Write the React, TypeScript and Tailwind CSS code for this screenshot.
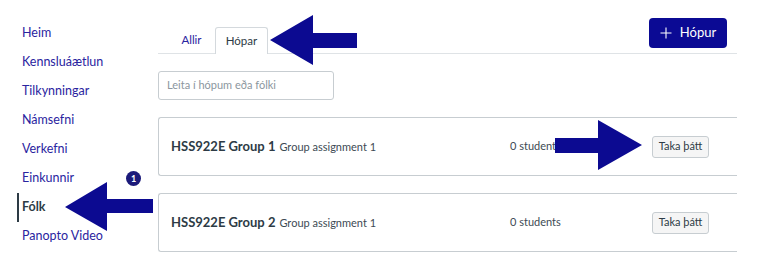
import React from "react";

const navItems = [
  "Heim",
  "Kennsluáætlun",
  "Tilkynningar",
  "Námsefni",
  "Verkefni",
  "Einkunnir",
  "Fólk",
  "Panopto Video",
];

const groups = [
  { name: "HSS922E Group 1", set: "Group assignment 1", count: "0 students" },
  { name: "HSS922E Group 2", set: "Group assignment 1", count: "0 students" },
];

const App: React.FC = () => {
  return (
    <div className="relative w-[768px] h-[271px] bg-white overflow-hidden font-['Lato','Liberation_Sans',sans-serif]">
      <div className="flex">
        {/* Course navigation */}
        <nav className="w-[158px] shrink-0 pl-[17px] pt-[19px]">
          {navItems.map((item) => {
            const active = item === "Fólk";
            return (
              <div
                key={item}
                className={`h-[29px] flex items-center pl-[3px] border-l-2 text-[12.5px] ${
                  active
                    ? "border-[#2d3b45] text-[#2d3b45] font-bold"
                    : "border-transparent text-[#2a24a0]"
                }`}
              >
                {item}
              </div>
            );
          })}
        </nav>

        {/* Main */}
        <main className="w-[579px] pt-[18px]">
          <div className="flex justify-between h-[36px] border-b border-[#dfe3e6]">
            <div className="flex items-end pl-[10px]">
              <div className="w-[47px] h-[27px] flex items-center justify-center text-[11.5px] text-[#2a24a0]">
                Allir
              </div>
              <div className="w-[53px] h-[27px] -mb-px flex items-center justify-center text-[11.5px] text-[#2d3b45] bg-white border border-b-0 border-[#d4d9dd] rounded-t-[3px]">
                Hópar
              </div>
            </div>
            <button className="mr-[10px] w-[78px] h-[30px] rounded-[4px] bg-[#0b0a94] text-white text-[13px] flex items-center justify-center gap-[8px]">
              <svg width="12" height="12" viewBox="0 0 12 12" className="shrink-0">
                <path d="M6 0.5v11M0.5 6h11" stroke="white" strokeWidth="1.1" fill="none" />
              </svg>
              Hópur
            </button>
          </div>

          <div className="mt-[17px] w-[176px] h-[29px] border border-[#c7cdd1] rounded-[3px] flex items-center pl-[8px] text-[11px] text-[#8b969e]">
            Leita í hópum eða fólki
          </div>

          <div className="mt-[17px] flex flex-col gap-[17px]">
            {groups.map((g) => (
              <div
                key={g.name}
                className="h-[59px] border border-r-0 border-[#c7cdd1] rounded-l-[3px] flex items-center pl-[12px]"
              >
                <div className="w-[339px] flex items-baseline gap-[4px] text-[#2d3b45]">
                  <span className="text-[13px] font-bold">{g.name}</span>
                  <span className="text-[11px] text-[#3d4a54]">{g.set}</span>
                </div>
                <span className="text-[11px] text-[#3d4a54]">{g.count}</span>
                <button className="ml-auto mr-[28px] w-[57px] h-[22px] rounded-[3px] border border-[#c7cdd1] bg-[#f5f5f5] text-[11px] text-[#2d3b45] flex items-center justify-center">
                  Taka þátt
                </button>
              </div>
            ))}
          </div>
        </main>
      </div>

      {/* Notification badge */}
      <div className="absolute left-[126px] top-[171px] w-[15px] h-[15px] rounded-full bg-[#1b1a7a] text-white text-[9px] font-bold flex items-center justify-center">
        1
      </div>

      {/* Annotation arrows */}
      <svg className="absolute left-0 top-0 pointer-events-none" width="768" height="271">
        <polygon
          points="65,207 107,182 107,199 153,199 153,213 107,213 107,231"
          fill="#0c0a91"
        />
        <polygon
          points="270,40 313,15 313,33 357,33 357,48 313,48 313,65"
          fill="#0c0a91"
        />
        <polygon
          points="642,145 598,120 598,138 555,138 555,153 598,153 598,170"
          fill="#0c0a91"
        />
      </svg>
    </div>
  );
};

export default App;
